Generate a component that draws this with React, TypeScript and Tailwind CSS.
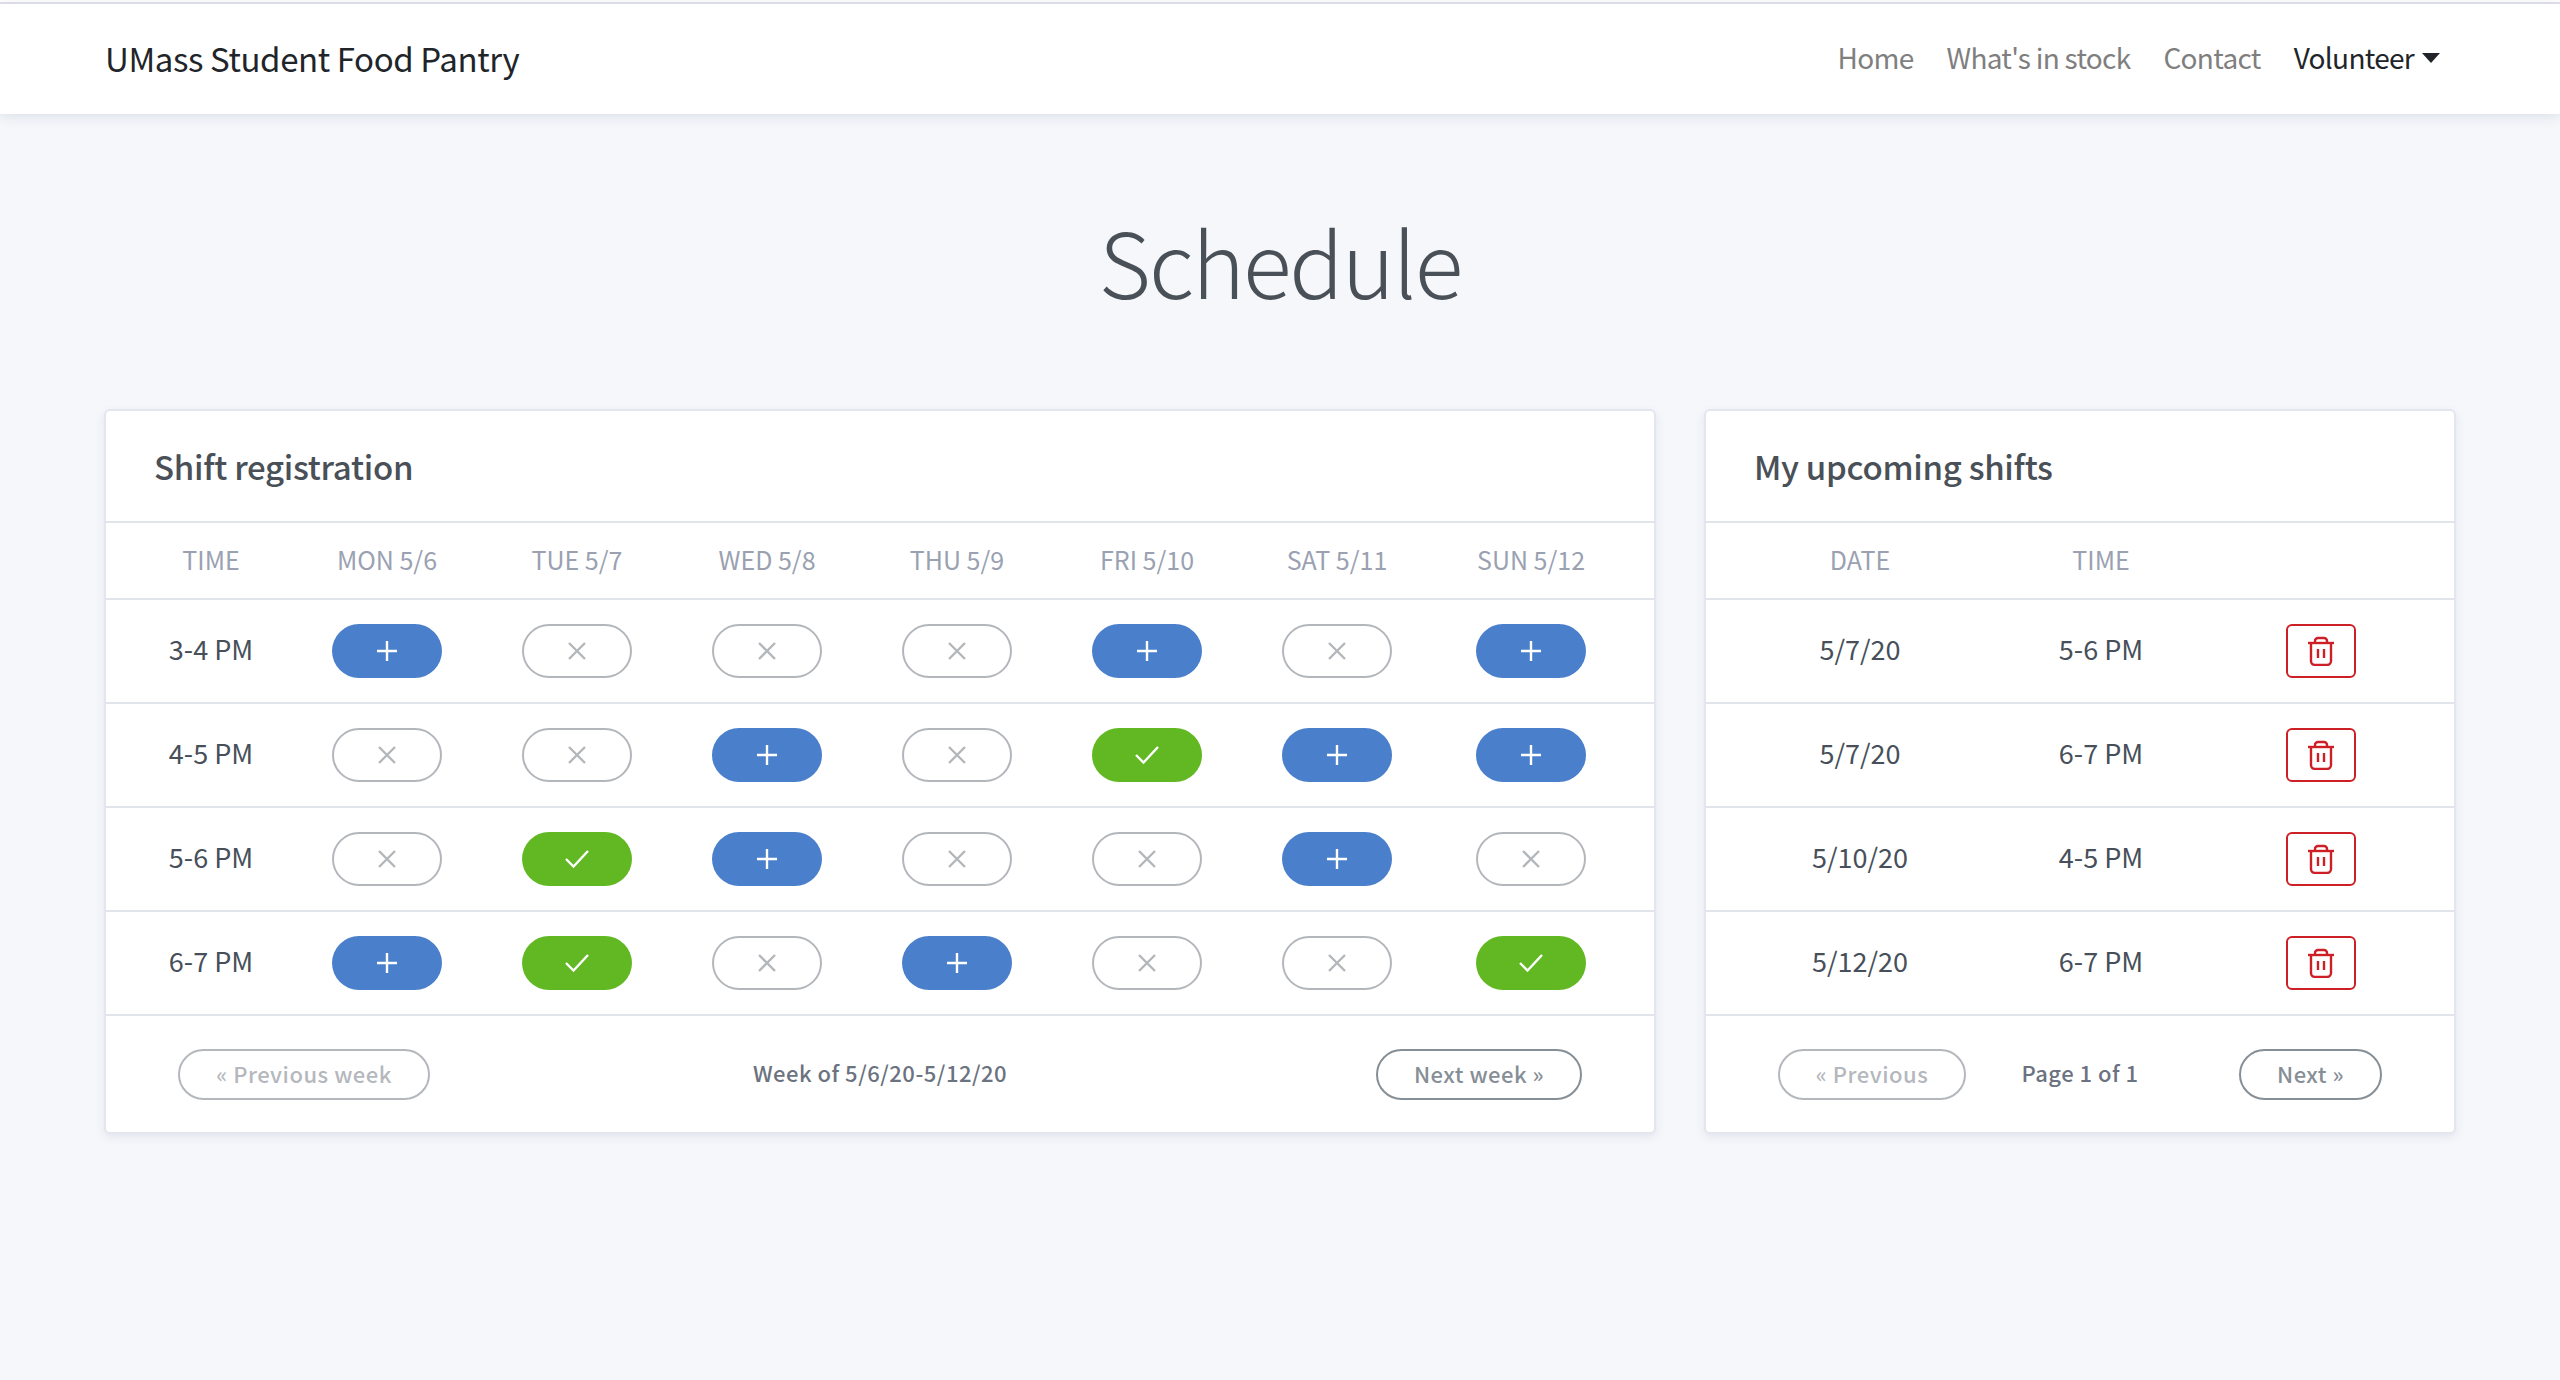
import React from 'react';

type Slot = 'add' | 'closed' | 'joined';

const days = ['MON 5/6', 'TUE 5/7', 'WED 5/8', 'THU 5/9', 'FRI 5/10', 'SAT 5/11', 'SUN 5/12'];

const rows: { time: string; slots: Slot[] }[] = [
  { time: '3-4 PM', slots: ['add', 'closed', 'closed', 'closed', 'add', 'closed', 'add'] },
  { time: '4-5 PM', slots: ['closed', 'closed', 'add', 'closed', 'joined', 'add', 'add'] },
  { time: '5-6 PM', slots: ['closed', 'joined', 'add', 'closed', 'closed', 'add', 'closed'] },
  { time: '6-7 PM', slots: ['add', 'joined', 'closed', 'add', 'closed', 'closed', 'joined'] },
];

const shifts = [
  { date: '5/7/20', time: '5-6 PM' },
  { date: '5/7/20', time: '6-7 PM' },
  { date: '5/10/20', time: '4-5 PM' },
  { date: '5/12/20', time: '6-7 PM' },
];

const weekCols = 'grid grid-cols-[162px_repeat(6,190px)_198px] pl-[24px] items-center';
const shiftCols = 'grid grid-cols-[262px_220px_220px] pl-[23px] items-center';

const PlusIcon = () => (
  <svg width="22" height="22" viewBox="0 0 22 22" fill="none" stroke="currentColor" strokeWidth="2.4">
    <path d="M11 1v20M1 11h20" />
  </svg>
);

const CrossIcon = () => (
  <svg width="20" height="20" viewBox="0 0 20 20" fill="none" stroke="currentColor" strokeWidth="2.4">
    <path d="M2 2l16 16M18 2L2 18" />
  </svg>
);

const CheckIcon = () => (
  <svg width="26" height="20" viewBox="0 0 26 20" fill="none" stroke="currentColor" strokeWidth="2.4">
    <path d="M2 10l7.5 7.5L24 2" />
  </svg>
);

const TrashIcon = () => (
  <svg width="28" height="30" viewBox="0 0 28 30" fill="none" stroke="currentColor" strokeWidth="2.4" strokeLinejoin="round">
    <path d="M1 7h26" />
    <path d="M8 7V5a3 3 0 0 1 3-3h6a3 3 0 0 1 3 3v2" />
    <path d="M4 7v18a4 4 0 0 0 4 4h12a4 4 0 0 0 4-4V7" />
    <path d="M11 13v9M17 13v9" />
  </svg>
);

const SlotButton = ({ slot }: { slot: Slot }) => {
  if (slot === 'add') {
    return (
      <button className="w-[110px] h-[54px] rounded-[27px] bg-[#4a7fcb] text-white flex items-center justify-center">
        <PlusIcon />
      </button>
    );
  }
  if (slot === 'joined') {
    return (
      <button className="w-[110px] h-[54px] rounded-[27px] bg-[#62b822] text-white flex items-center justify-center">
        <CheckIcon />
      </button>
    );
  }
  return (
    <button className="w-[110px] h-[54px] rounded-[27px] border-2 border-[#b3b7bb] text-[#b3b7bb] flex items-center justify-center">
      <CrossIcon />
    </button>
  );
};

const PagerButton = ({ label, disabled, width }: { label: string; disabled?: boolean; width: string }) => (
  <button
    className={`${width} h-[51px] pb-[2px] rounded-[26px] border-2 text-[22px] font-medium tracking-[0.5px] flex items-center justify-center ${
      disabled ? 'border-[#b4b8bd] text-[#b4b8bd]' : 'border-[#868e96] text-[#868e96]'
    }`}
  >
    {label}
  </button>
);

const CardTitle = ({ children }: { children: React.ReactNode }) => (
  <div className="h-[112px] pl-[48px] pt-[2px] flex items-center border-b-2 border-[#e0e5ec] text-[33px] font-medium tracking-[-0.3px] text-[#495057]">
    {children}
  </div>
);

const CardFooter = ({ left, center, right, padding }: { left: React.ReactNode; center: string; right: React.ReactNode; padding: string }) => (
  <div className={`h-[116px] ${padding} flex items-center`}>
    <div className="flex-1 flex justify-start">{left}</div>
    <span className="pb-[3px] text-[22px] font-medium tracking-[0.5px] text-[#6b7280]">{center}</span>
    <div className="flex-1 flex justify-end">{right}</div>
  </div>
);

export default function App() {
  return (
    <div className="min-h-screen bg-[#f5f7fb] font-['Noto_Sans_CJK_SC','Source_Sans_Pro',sans-serif]">
      <nav className="mt-[4px] h-[110px] bg-white shadow-[0_2px_12px_rgba(60,70,100,0.14)] pl-[105px] pr-[120px] flex items-center justify-between relative before:absolute before:left-0 before:right-0 before:top-[-2px] before:h-[2px] before:bg-[#dcdce6]">
        <a className="text-[33px] tracking-[-0.4px] text-[#212529] -mt-[1px]">UMass Student Food Pantry</a>
        <div className="flex items-center gap-[33px] text-[28px] tracking-[-0.7px] text-[#7f7f7f] -mt-[4px]">
          <a>Home</a>
          <a>What's in stock</a>
          <a>Contact</a>
          <a className="flex items-center gap-[8px] text-[#212529]">
            Volunteer
            <span className="mt-[1px] border-x-[9px] border-x-transparent border-t-[10px] border-t-[#212529]" />
          </a>
        </div>
      </nav>

      <h1 className="pt-[92px] h-[295px] text-center text-[90px] leading-[1.2] tracking-[-2px] font-light text-[#495057]">Schedule</h1>

      <main className="flex gap-[48px] pl-[104px]">
        <section className="w-[1552px] bg-white rounded-[6px] border-2 border-[#e3e6ee] shadow-[0_3px_10px_rgba(60,70,100,0.1)]">
          <CardTitle>Shift registration</CardTitle>
          <div className={`${weekCols} h-[77px] pb-[2px] border-b-2 border-[#e0e5ec] text-[25px] text-[#9aa1b1] text-center`}>
            <div>TIME</div>
            {days.map((day) => (
              <div key={day}>{day}</div>
            ))}
          </div>
          {rows.map((row) => (
            <div key={row.time} className={`${weekCols} h-[104px] border-b-2 border-[#e0e5ec] text-[27px] text-[#47505a] text-center`}>
              <div className="pb-[3px]">{row.time}</div>
              {row.slots.map((slot, i) => (
                <div key={i} className="flex justify-center">
                  <SlotButton slot={slot} />
                </div>
              ))}
            </div>
          ))}
          <CardFooter
            padding="px-[72px]"
            left={<PagerButton label="« Previous week" disabled width="w-[252px]" />}
            center="Week of 5/6/20-5/12/20"
            right={<PagerButton label="Next week »" width="w-[206px]" />}
          />
        </section>

        <section className="w-[752px] bg-white rounded-[6px] border-2 border-[#e3e6ee] shadow-[0_3px_10px_rgba(60,70,100,0.1)]">
          <CardTitle>My upcoming shifts</CardTitle>
          <div className={`${shiftCols} h-[77px] pb-[2px] border-b-2 border-[#e0e5ec] text-[25px] text-[#9aa1b1] text-center`}>
            <div>DATE</div>
            <div>TIME</div>
            <div />
          </div>
          {shifts.map((shift) => (
            <div key={shift.date + shift.time} className={`${shiftCols} h-[104px] border-b-2 border-[#e0e5ec] text-[27px] text-[#47505a] text-center`}>
              <div className="pb-[3px]">{shift.date}</div>
              <div className="pb-[3px]">{shift.time}</div>
              <div className="flex justify-center">
                <button className="w-[70px] h-[54px] rounded-[6px] border-2 border-[#cd2026] text-[#cd2026] flex items-center justify-center">
                  <TrashIcon />
                </button>
              </div>
            </div>
          ))}
          <CardFooter
            padding="px-[72px]"
            left={<PagerButton label="« Previous" disabled width="w-[188px]" />}
            center="Page 1 of 1"
            right={<PagerButton label="Next »" width="w-[143px]" />}
          />
        </section>
      </main>
    </div>
  );
}
